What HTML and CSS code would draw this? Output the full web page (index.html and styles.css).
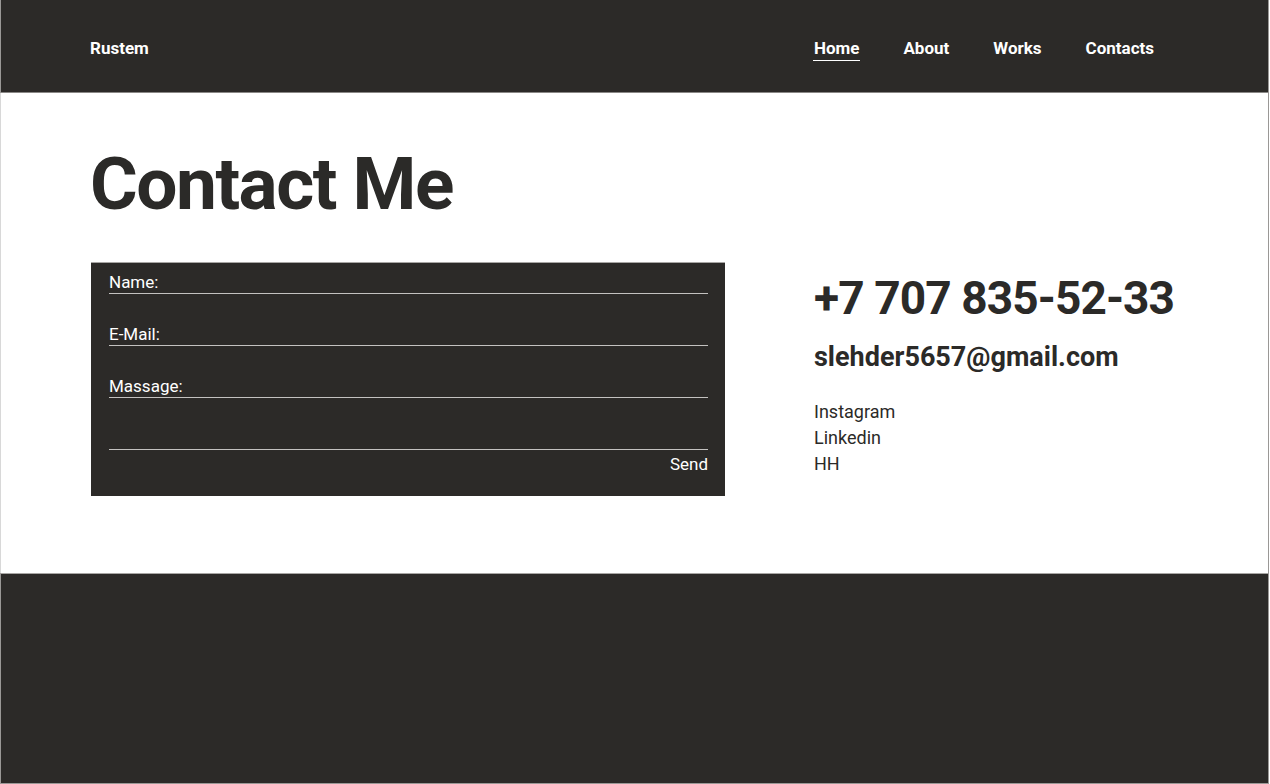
FILE: index.html
```html
<!DOCTYPE html>
<html lang="en">
<head>
<meta charset="utf-8">
<title>Contact Me</title>
<link rel="stylesheet" href="styles.css">
</head>
<body>
<div class="page">
  <header class="header">
    <div class="logo">Rustem</div>
    <nav class="nav">
      <a class="nav-link active" href="#">Home</a>
      <a class="nav-link" href="#">About</a>
      <a class="nav-link" href="#">Works</a>
      <a class="nav-link" href="#">Contacts</a>
    </nav>
  </header>
  <main class="main">
    <h1 class="title">Contact Me</h1>
    <div class="content">
      <form class="form">
        <div class="field">Name:</div>
        <div class="field">E-Mail:</div>
        <div class="field">Massage:</div>
        <div class="field field-area"></div>
        <div class="send">Send</div>
      </form>
      <div class="info">
        <div class="phone">+7 707 835-52-33</div>
        <div class="email">slehder5657@gmail.com</div>
        <ul class="links">
          <li>Instagram</li>
          <li>Linkedin</li>
          <li>HH</li>
        </ul>
      </div>
    </div>
  </main>
  <footer class="footer"></footer>
</div>
</body>
</html>
```
FILE: styles.css
```css
html, body {
  margin: 0;
  padding: 0;
  background: #ffffff;
}
body {
  font-family: Roboto, "Liberation Sans", sans-serif;
  color: #2b2a28;
}
.page {
  width: 1267px;
  height: 783px;
  border-left: 1px solid #9a9896;
  border-right: 1px solid #9a9896;
  border-bottom: 1px solid #9a9896;
  display: flex;
  flex-direction: column;
}
.header {
  box-sizing: border-box;
  background: #2c2a28;
  border-bottom: 1px solid #8a8886;
  height: 93px;
  display: flex;
  align-items: center;
  justify-content: space-between;
  padding: 4px 113px 0 89px;
}
.logo {
  color: #ffffff;
  font-weight: 700;
  font-size: 17px;
}
.nav {
  display: flex;
  gap: 42px;
}
.nav-link {
  color: #ffffff;
  font-weight: 700;
  font-size: 17px;
  text-decoration: none;
  padding: 0 1px 2px;
  border-bottom: 1px solid transparent;
  position: relative;
  top: 1px;
}
.nav-link.active {
  border-bottom-color: #ffffff;
}
.main {
  height: 480px;
  box-sizing: border-box;
  background: #ffffff;
  padding: 53px 0 0 89px;
  border-left: 1px solid #d8d8d8;
  margin-left: -1px;
}
.title {
  margin: 0;
  font-size: 73px;
  line-height: 76px;
  font-weight: 700;
  letter-spacing: -1.5px;
}
.content {
  display: flex;
  margin-top: 40px;
  gap: 89px;
}
.form {
  width: 634px;
  height: 234px;
  box-sizing: border-box;
  background: #2c2a28;
  border-top: 1px solid #a8a6a4;
  padding: 9px 17px 0 18px;
  margin-left: 1px;
  color: #ffffff;
  font-size: 17px;
}
.field {
  line-height: 21px;
  min-height: 21px;
  border-bottom: 1px solid #c4c2c0;
  margin-bottom: 30px;
}
.field-area {
  margin-bottom: 0;
}
.send {
  text-align: right;
  line-height: 21px;
  margin-top: 4px;
}
.info {
  padding-top: 9px;
}
.phone {
  font-size: 46px;
  font-weight: 700;
  line-height: 54px;
  letter-spacing: -0.9px;
}
.email {
  font-size: 27px;
  font-weight: 700;
  line-height: 32px;
  margin-top: 16px;
}
.links {
  list-style: none;
  margin: 26px 0 0;
  padding: 0;
  font-size: 18px;
  line-height: 26px;
}
.footer {
  flex: 1;
  background: #2c2a28;
  border-top: 1px solid #a8a6a4;
}
```
